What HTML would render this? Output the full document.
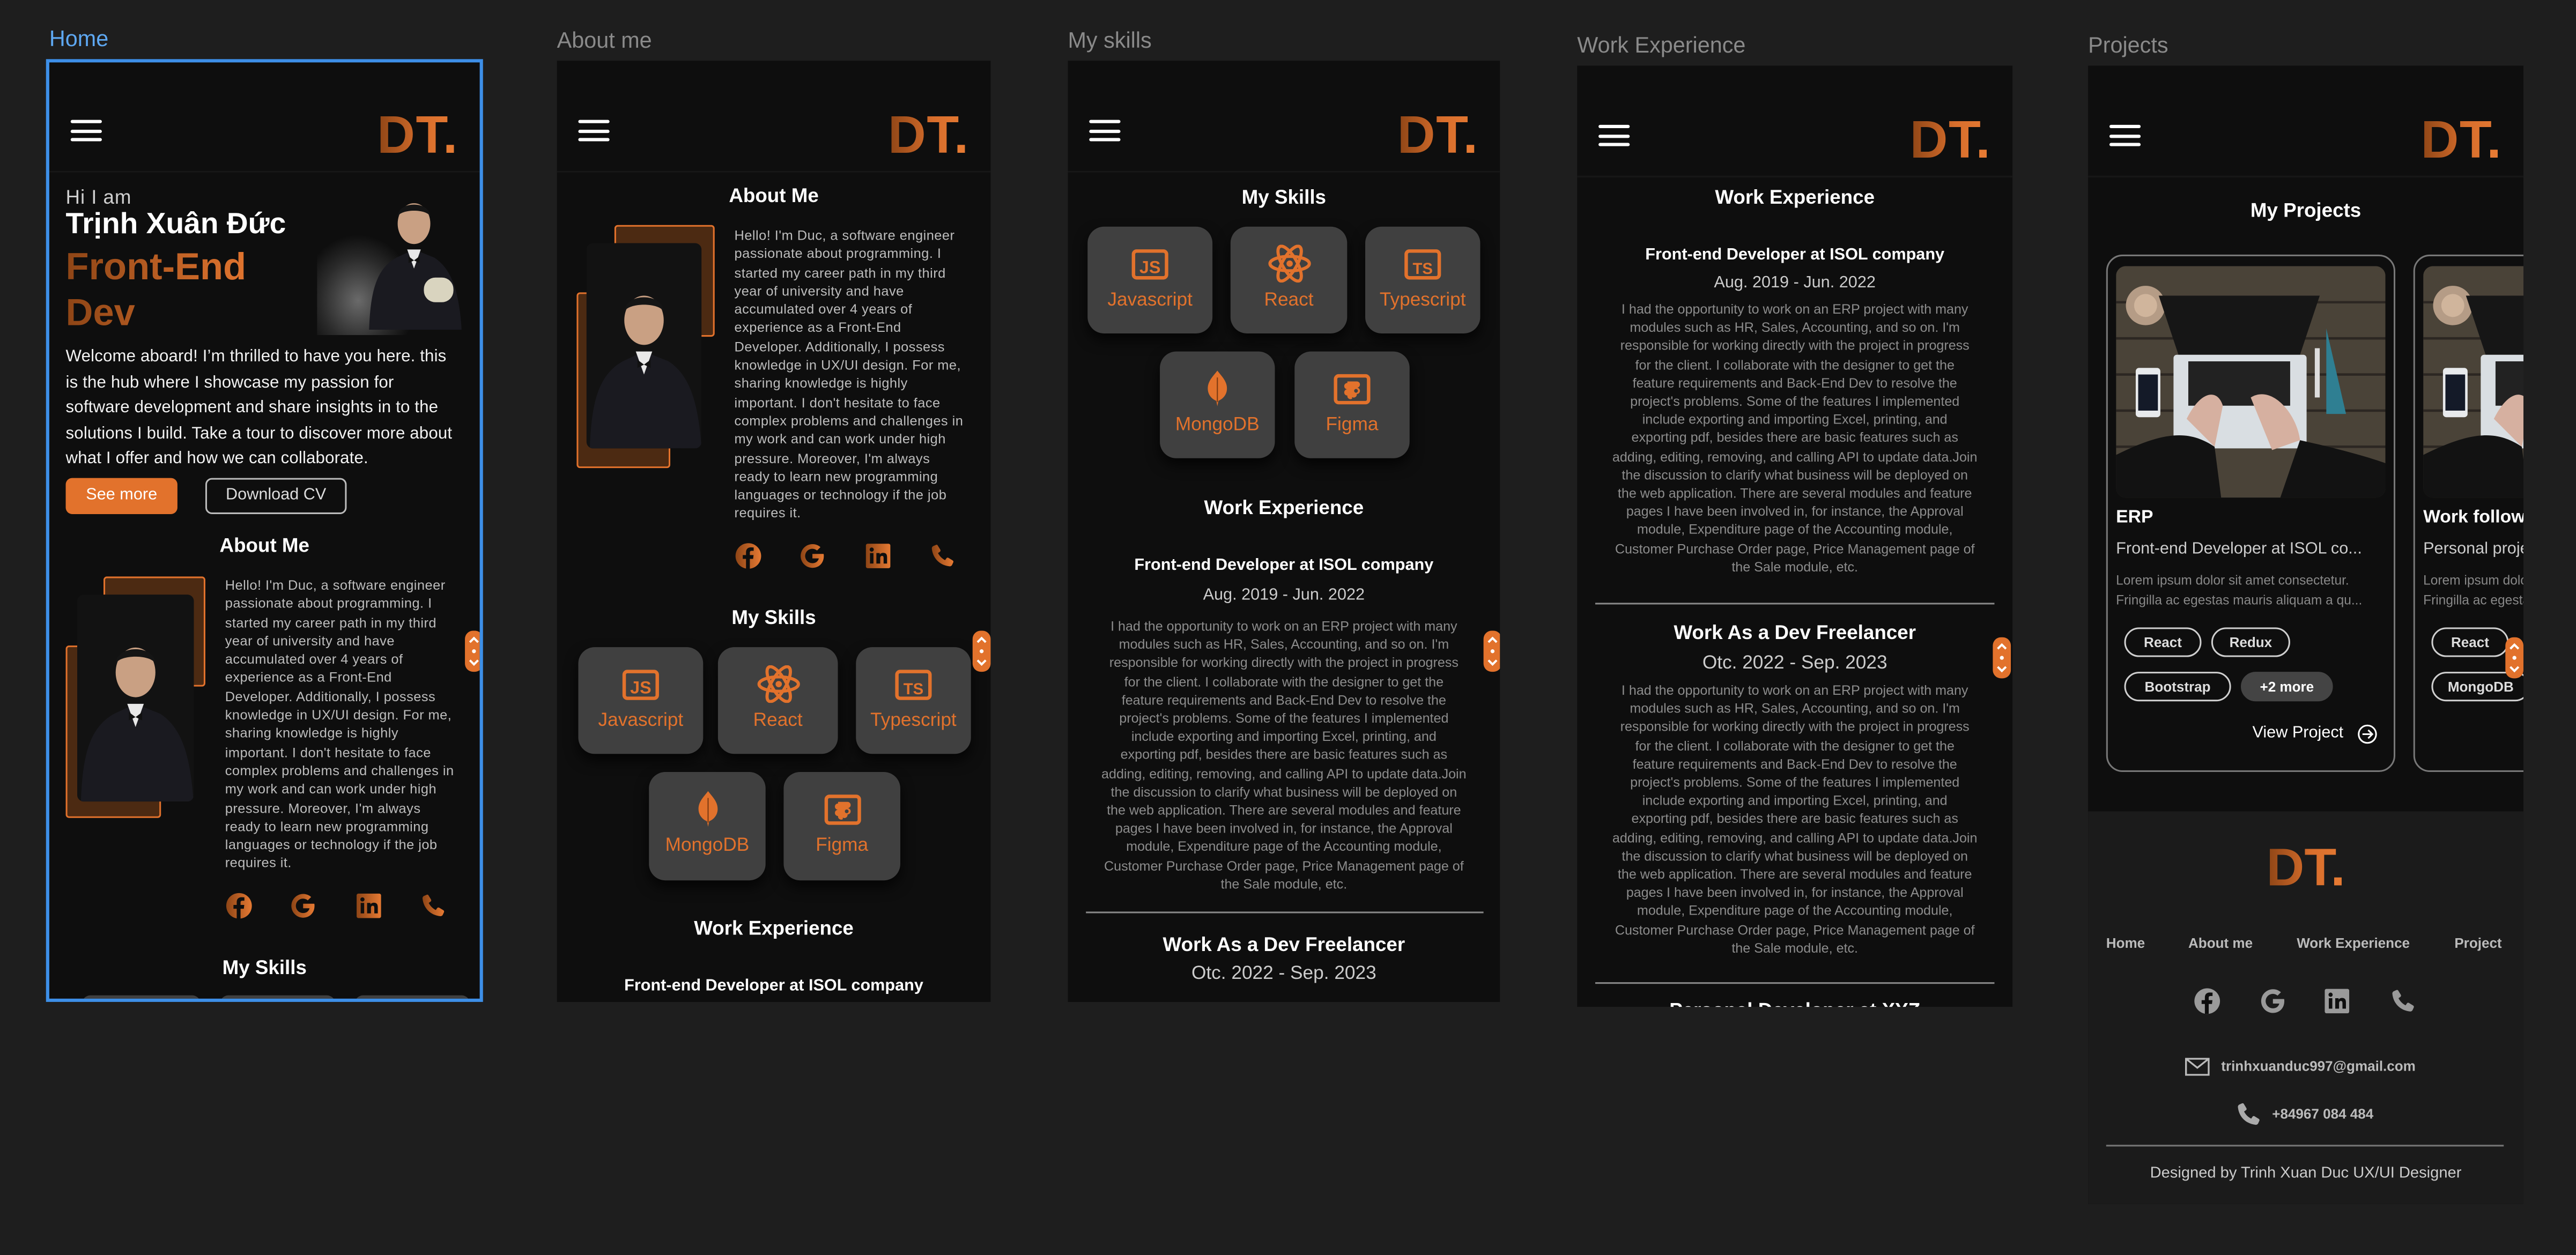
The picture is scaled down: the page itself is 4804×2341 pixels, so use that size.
<!DOCTYPE html>
<html><head><meta charset="utf-8">
<style>
html,body{margin:0;padding:0;}
body{width:4804px;height:2340px;overflow:hidden;background:#1e1e1e;font-family:"Liberation Sans","Noto Sans CJK SC",sans-serif;}
#s{position:absolute;left:0;top:0;width:1568px;height:764px;transform:scale(3.0638);transform-origin:0 0;}
.a{position:absolute;}
.lbl{position:absolute;font-size:13.5px;color:#8a8a8a;white-space:nowrap;}
.fr{position:absolute;background:#0e0e0e;overflow:hidden;}
.hb{position:absolute;left:13px;top:36px;width:19px;height:14px;}
.hb i{position:absolute;left:0;width:19px;height:2.4px;background:#fff;border-radius:1px;}
.dt{position:absolute;right:13px;top:27px;font-size:32px;font-weight:bold;letter-spacing:0.5px;white-space:nowrap;background:linear-gradient(90deg,#8e4516,#d86e2c 55%,#e67a33);-webkit-background-clip:text;background-clip:text;color:transparent;line-height:36px;}
.hl{position:absolute;left:0;top:67px;width:100%;height:1px;background:#171717;}
.h{position:absolute;left:0;width:100%;text-align:center;color:#fff;font-weight:bold;white-space:nowrap;}
.c{position:absolute;left:0;width:100%;text-align:center;white-space:nowrap;}
.ab{position:absolute;font-size:8.3px;line-height:11.3px;color:#bdbdbd;white-space:nowrap;letter-spacing:0.15px;}
.wp{position:absolute;left:0;width:100%;text-align:center;font-size:8.2px;line-height:11.2px;color:#8c8c8c;white-space:nowrap;}
.br1{position:absolute;border:1.5px solid #e2722c;background:#4c2a12;border-radius:2px;box-sizing:border-box;}
.ph{position:absolute;border-radius:4px;overflow:hidden;background:#121212;}
.card{position:absolute;background:#404040;border-radius:10px;box-shadow:0 4px 8px rgba(0,0,0,.7);color:#e2722c;font-size:11.5px;text-align:center;}
.card svg{position:absolute;left:50%;top:13px;transform:translateX(-50%);}
.card span{position:absolute;left:0;right:0;top:39px;white-space:nowrap;}
.sc{position:absolute;width:11px;height:25px;background:#e2722c;border-radius:5px;}
.sc::after{content:"";position:absolute;left:0;top:0;width:11px;height:25px;background:no-repeat center/11px 25px url();}
.ic{position:absolute;width:17px;height:17px;}
.tag{position:absolute;height:18px;border:1px solid #cfcfcf;border-radius:9px;box-sizing:border-box;color:#ddd;font-size:8.5px;line-height:16px;text-align:center;font-weight:bold;}
</style></head><body>
<svg width="0" height="0" style="position:absolute">
<defs>
<linearGradient id="og" x1="0" x2="1" y1="0" y2="0"><stop offset="0" stop-color="#8e4516"/><stop offset="1" stop-color="#e67a33"/></linearGradient>
<symbol id="fb" viewBox="0 0 24 24"><circle cx="12" cy="12" r="11"/><path d="M13.3 23V14.5h2.8l.4-3.3h-3.2V9.2c0-.9.3-1.6 1.6-1.6h1.7V4.7c-.3 0-1.3-.1-2.5-.1-2.5 0-4.1 1.5-4.1 4.2v2.4H7.2v3.3H10V23z" fill="#0e0e0e"/></symbol>
<symbol id="gg" viewBox="0 0 24 24"><path d="M21.6 10.2H12v3.9h5.5c-.6 2.6-2.8 4.1-5.5 4.1a6.2 6.2 0 1 1 4-10.9l2.9-2.9A10.2 10.2 0 1 0 12 22.2c5.300 0 9.8-3.8 9.8-10.2 0-.6 0-1.2-.2-1.8z"/></symbol>
<symbol id="li" viewBox="0 0 24 24"><rect x="1.5" y="1.5" width="21" height="21" rx="1.5"/><rect x="5" y="9.5" width="3" height="9" fill="#0e0e0e"/><circle cx="6.5" cy="6.5" r="1.8" fill="#0e0e0e"/><path d="M10.5 9.5h2.9v1.3c.5-.9 1.6-1.5 3-1.5 2.5 0 3.3 1.5 3.3 4v5.2h-3v-4.6c0-1.1-.2-2-1.3-2s-1.6.8-1.6 2v4.6h-3.3z" fill="#0e0e0e"/></symbol>
<symbol id="ph" viewBox="0 0 24 24"><path d="M6.6 2.5c.6-.3 1.3-.1 1.6.5l2.2 3.6c.3.6.2 1.3-.3 1.7L8.4 9.5c1.3 2.6 3.4 4.8 6.1 6.1l1.2-1.7c.4-.5 1.1-.7 1.700-.3l3.6 2.2c.6.4.8 1.1.5 1.7l-1 2.2c-.4.8-1.3 1.3-2.2 1.2C9.9 20 4 14.1 3.1 5.7c-.1-.9.4-1.8 1.2-2.2z"/></symbol>
<symbol id="js" viewBox="0 0 24 20"><rect x="1.5" y="1.5" width="21" height="17" rx="2" fill="none" stroke="#e2722c" stroke-width="2.2"/><text x="12" y="15.5" text-anchor="middle" font-family="Liberation Sans" font-weight="bold" font-size="11" fill="#e2722c">JS</text></symbol>
<symbol id="ts" viewBox="0 0 24 20"><rect x="1.5" y="1.5" width="21" height="17" rx="2" fill="none" stroke="#e2722c" stroke-width="2.2"/><text x="12" y="16" text-anchor="middle" font-family="Liberation Sans" font-weight="bold" font-size="10" fill="#e2722c">TS</text></symbol>
<symbol id="re" viewBox="0 0 28 24" fill="none" stroke="#e2722c" stroke-width="2"><ellipse cx="14" cy="12" rx="12.5" ry="4.6"/><ellipse cx="14" cy="12" rx="12.5" ry="4.6" transform="rotate(60 14 12)"/><ellipse cx="14" cy="12" rx="12.5" ry="4.6" transform="rotate(-60 14 12)"/><circle cx="14" cy="12" r="2" fill="#e2722c" stroke="none"/></symbol>
<symbol id="mg" viewBox="0 0 24 28"><path d="M12 1c3 4 7 7.5 7 13 0 5-3.5 8-6.2 9L12 27l-.8-4C8.5 22 5 19 5 14c0-5.5 4-9 7-13z" fill="#e2722c"/><path d="M12 6v18" stroke="#7a3a12" stroke-width="0.8"/></symbol>
<symbol id="fg" viewBox="0 0 24 20"><rect x="1.5" y="1.5" width="21" height="17" rx="2" fill="none" stroke="#e2722c" stroke-width="2.2"/><path d="M9 5h6a2 2 0 0 1 0 4 2 2 0 0 1 0 4 2 2 0 0 1-3 2v1a2 2 0 0 1-3-2 2 2 0 0 1 0-4 2 2 0 0 1 0-4z" fill="#e2722c"/><circle cx="14.5" cy="11" r="1.2" fill="#404040"/></symbol>
<symbol id="person" viewBox="0 0 70 125"><path d="M2 125 C3 95 8 80 22 72 L35 66 L50 72 C62 80 68 95 70 125Z" fill="#1a1a20"/><path d="M30 66 L35 80 L40 66Z" fill="#e8e8e8"/><path d="M31 71 L35 74 L39 71 L39 76 L35 74 L31 76Z" fill="#111"/><ellipse cx="35" cy="47" rx="12" ry="15" fill="#c9a083"/><path d="M23 42 C23 30 47 30 47 42 C45 36 25 36 23 42Z" fill="#151515"/></symbol>
<symbol id="scr" viewBox="0 0 11 25" fill="none" stroke="#fff" stroke-width="1.3"><path d="M3 7l2.5-2.5L8 7M3 18l2.5 2.5L8 18"/><circle cx="5.5" cy="12.5" r="1.2" fill="#fff" stroke="none"/></symbol>
<symbol id="laptop" viewBox="0 0 164 141"><rect width="164" height="141" fill="#4a4338"/><g stroke="#2c2722" stroke-width="1.5"><line x1="0" y1="22" x2="164" y2="22"/><line x1="0" y1="44" x2="164" y2="44"/><line x1="0" y1="66" x2="164" y2="66"/><line x1="0" y1="88" x2="164" y2="88"/><line x1="0" y1="110" x2="164" y2="110"/></g><circle cx="18" cy="24" r="12" fill="#b59c86"/><circle cx="18" cy="24" r="7" fill="#d0b59c"/><path d="M26 18 L124 18 L112 54 L38 54Z" fill="#161616"/><rect x="35" y="54" width="81" height="57" rx="2" fill="#d9dee2"/><rect x="44" y="58" width="62" height="27" fill="#222"/><rect x="12" y="62" width="15" height="30" rx="2" fill="#e8eaec"/><rect x="13.5" y="66" width="12" height="22" fill="#141a28"/><path d="M128 38 L140 90 L128 90Z" fill="#2f7f92"/><rect x="121" y="50" width="3" height="30" fill="#ddd"/><path d="M43 93 C52 75 62 75 65 85 L60 110 Z" fill="#d6b0a0"/><path d="M82 80 C95 72 110 90 112 106 L95 112 Z" fill="#d6b0a0"/><path d="M0 141 L0 115 C30 100 45 100 60 110 L64 141Z M100 141 L112 106 C130 110 150 115 164 120 L164 141Z" fill="#121212"/></symbol>
</defs></svg>

<div id="s">
<div class="lbl" style="left:30px;top:16px;color:#5ea8f2;">Home</div>
<div class="lbl" style="left:339px;top:17px;">About me</div>
<div class="lbl" style="left:650px;top:17px;">My skills</div>
<div class="lbl" style="left:960px;top:20px;">Work Experience</div>
<div class="lbl" style="left:1271px;top:20px;">Projects</div>

<!-- FRAME 1 -->
<div class="a" style="left:28px;top:36px;width:266px;height:574px;border:2px solid #3d8fe8;box-sizing:border-box;z-index:2;pointer-events:none;"></div>
<div class="fr" style="left:30px;top:38px;width:262px;height:570px;">
 <div class="hb" style="top:35px"><i style="top:0"></i><i style="top:5.5px"></i><i style="top:11px"></i></div>
 <div class="dt" style="top:26px">DT<span style="color:#e67a33;-webkit-text-fill-color:#e67a33">.</span></div>
 <div class="hl" style="top:66px"></div>
 <div class="a" style="left:10px;top:75px;font-size:12px;color:#cfcfcf;letter-spacing:.3px;">Hi I am</div>
 <div class="a" style="left:10px;top:88px;font-size:18px;font-weight:bold;color:#fff;white-space:nowrap;">Trịnh Xuân Đức</div>
 <div class="a" style="left:10px;top:110px;font-size:23px;line-height:28px;font-weight:bold;color:#c25f22;background:linear-gradient(90deg,#8e4516,#e0742f);-webkit-background-clip:text;background-clip:text;-webkit-text-fill-color:transparent;">Front-End<br>Dev</div>
 <div class="a" style="left:163px;top:75px;width:89px;height:91px;overflow:hidden;background:radial-gradient(ellipse 35px 40px at 25px 70px,#6a6a6a,#2a2a2a 65%,#0e0e0e);">
  <svg class="a" style="left:30px;top:-16px" width="58" height="104" viewBox="0 0 70 125"><use href="#person"/></svg>
  <div class="a" style="left:65px;top:56px;width:18px;height:15px;border-radius:7px;background:#d9d4bf;"></div>
 </div>
 <div class="a" style="left:10px;top:172px;font-size:10.2px;line-height:15.5px;color:#f2f2f2;white-space:nowrap;letter-spacing:.05px;">Welcome aboard! I’m thrilled to have you here. this<br>is the hub where I showcase my passion for<br>software development and share insights in to the<br>solutions I build. Take a tour to discover more about<br>what I offer and how we can collaborate.</div>
 <div class="a" style="left:10px;top:253px;width:68px;height:22px;background:#e2722c;border-radius:4px;color:#fff;font-size:10px;text-align:center;line-height:22px;">See more</div>
 <div class="a" style="left:95px;top:253px;width:86px;height:22px;border:1px solid #bbb;box-sizing:border-box;border-radius:4px;color:#ddd;font-size:10px;text-align:center;line-height:20px;">Download CV</div>
 <div class="h" style="top:287px;font-size:12px;">About Me</div>
 <div class="br1" style="left:33px;top:313px;width:62px;height:67px;"></div>
 <div class="br1" style="left:10px;top:355px;width:58px;height:105px;"></div>
 <div class="ph" style="left:17px;top:324px;width:71px;height:126px;"><svg width="71" height="126" viewBox="0 0 70 125"><use href="#person"/></svg></div>
 <div class="ab" style="left:107px;top:313px;">Hello! I'm Duc, a software engineer<br>passionate about programming. I<br>started my career path in my third<br>year of university and have<br>accumulated over 4 years of<br>experience as a Front-End<br>Developer. Additionally, I possess<br>knowledge in UX/UI design. For me,<br>sharing knowledge is highly<br>important. I don't hesitate to face<br>complex problems and challenges in<br>my work and can work under high<br>pressure. Moreover, I'm always<br>ready to learn new programming<br>languages or technology if the job<br>requires it.</div>
 <svg class="ic" style="left:107px;top:505px" fill="url(#og)"><use href="#fb"/></svg>
 <svg class="ic" style="left:146px;top:505px" fill="url(#og)"><use href="#gg"/></svg>
 <svg class="ic" style="left:186px;top:505px" fill="url(#og)"><use href="#li"/></svg>
 <svg class="ic" style="left:225px;top:505px" fill="url(#og)"><use href="#ph"/></svg>
 <div class="h" style="top:544px;font-size:12px;">My Skills</div>
 <div class="sc" style="left:253px;top:346px"><svg width="11" height="25"><use href="#scr"/></svg></div>
 <div class="a" style="left:20px;top:568px;width:72px;height:10px;background:#404040;border-radius:8px;"></div>
 <div class="a" style="left:104px;top:568px;width:70px;height:10px;background:#404040;border-radius:8px;"></div>
 <div class="a" style="left:186px;top:568px;width:70px;height:10px;background:#404040;border-radius:8px;"></div>
</div>

<!-- FRAME 2 -->
<div class="fr" style="left:339px;top:37px;width:264px;height:573px;">
 <div class="hb"><i style="top:0"></i><i style="top:5.5px"></i><i style="top:11px"></i></div>
 <div class="dt">DT<span style="color:#e67a33;-webkit-text-fill-color:#e67a33">.</span></div>
 <div class="hl"></div>
 <div class="h" style="top:75px;font-size:12px;">About Me</div>
 <div class="br1" style="left:35px;top:100px;width:61px;height:68px;"></div>
 <div class="br1" style="left:12px;top:141px;width:57px;height:107px;"></div>
 <div class="ph" style="left:18px;top:111px;width:70px;height:125px;"><svg width="70" height="125" viewBox="0 0 70 125"><use href="#person"/></svg></div>
 <div class="ab" style="left:108px;top:101px;">Hello! I'm Duc, a software engineer<br>passionate about programming. I<br>started my career path in my third<br>year of university and have<br>accumulated over 4 years of<br>experience as a Front-End<br>Developer. Additionally, I possess<br>knowledge in UX/UI design. For me,<br>sharing knowledge is highly<br>important. I don't hesitate to face<br>complex problems and challenges in<br>my work and can work under high<br>pressure. Moreover, I'm always<br>ready to learn new programming<br>languages or technology if the job<br>requires it.</div>
 <svg class="ic" style="left:108px;top:293px" fill="url(#og)"><use href="#fb"/></svg>
 <svg class="ic" style="left:147px;top:293px" fill="url(#og)"><use href="#gg"/></svg>
 <svg class="ic" style="left:187px;top:293px" fill="url(#og)"><use href="#li"/></svg>
 <svg class="ic" style="left:226px;top:293px" fill="url(#og)"><use href="#ph"/></svg>
 <div class="h" style="top:332px;font-size:12px;">My Skills</div>
 <div class="card" style="left:13px;top:357px;width:76px;height:65px;"><svg width="23" height="20"><use href="#js"/></svg><span>Javascript</span></div>
 <div class="card" style="left:98px;top:357px;width:73px;height:65px;"><svg width="27" height="23" style="top:11px"><use href="#re"/></svg><span>React</span></div>
 <div class="card" style="left:182px;top:357px;width:70px;height:65px;"><svg width="23" height="20"><use href="#ts"/></svg><span>Typescript</span></div>
 <div class="card" style="left:56px;top:433px;width:71px;height:66px;"><svg width="20" height="25" style="top:10px"><use href="#mg"/></svg><span>MongoDB</span></div>
 <div class="card" style="left:138px;top:433px;width:71px;height:66px;"><svg width="23" height="20"><use href="#fg"/></svg><span>Figma</span></div>
 <div class="h" style="top:521px;font-size:12px;">Work Experience</div>
 <div class="h" style="top:558px;font-size:10px;">Front-end Developer at ISOL company</div>
 <div class="sc" style="left:253px;top:347px"><svg width="11" height="25"><use href="#scr"/></svg></div>
</div>

<!-- FRAME 3 -->
<div class="fr" style="left:650px;top:37px;width:263px;height:573px;">
 <div class="hb"><i style="top:0"></i><i style="top:5.5px"></i><i style="top:11px"></i></div>
 <div class="dt">DT<span style="color:#e67a33;-webkit-text-fill-color:#e67a33">.</span></div>
 <div class="hl"></div>
 <div class="h" style="top:76px;font-size:12px;">My Skills</div>
 <div class="card" style="left:12px;top:101px;width:76px;height:65px;"><svg width="23" height="20"><use href="#js"/></svg><span>Javascript</span></div>
 <div class="card" style="left:99px;top:101px;width:71px;height:65px;"><svg width="27" height="23" style="top:11px"><use href="#re"/></svg><span>React</span></div>
 <div class="card" style="left:181px;top:101px;width:70px;height:65px;"><svg width="23" height="20"><use href="#ts"/></svg><span>Typescript</span></div>
 <div class="card" style="left:56px;top:177px;width:70px;height:65px;"><svg width="20" height="25" style="top:10px"><use href="#mg"/></svg><span>MongoDB</span></div>
 <div class="card" style="left:138px;top:177px;width:70px;height:65px;"><svg width="23" height="20"><use href="#fg"/></svg><span>Figma</span></div>
 <div class="h" style="top:265px;font-size:12px;">Work Experience</div>
 <div class="h" style="top:302px;font-size:10px;">Front-end Developer at ISOL company</div>
 <div class="c" style="top:320px;font-size:10px;color:#ccc;">Aug. 2019 - Jun. 2022</div>
 <div class="wp" style="top:339px;">I had the opportunity to work on an ERP project with many<br>modules such as HR, Sales, Accounting, and so on. I'm<br>responsible for working directly with the project in progress<br>for the client. I collaborate with the designer to get the<br>feature requirements and Back-End Dev to resolve the<br>project's problems. Some of the features I implemented<br>include exporting and importing Excel, printing, and<br>exporting pdf, besides there are basic features such as<br>adding, editing, removing, and calling API to update data.Join<br>the discussion to clarify what business will be deployed on<br>the web application. There are several modules and feature<br>pages I have been involved in, for instance, the Approval<br>module, Expenditure page of the Accounting module,<br>Customer Purchase Order page, Price Management page of<br>the Sale module, etc.</div>
 <div class="a" style="left:11px;top:518px;width:242px;height:1px;background:#888;"></div>
 <div class="h" style="top:531px;font-size:12px;">Work As a Dev Freelancer</div>
 <div class="c" style="top:550px;font-size:11.5px;color:#ccc;">Otc. 2022 - Sep. 2023</div>
 <div class="sc" style="left:253px;top:347px"><svg width="11" height="25"><use href="#scr"/></svg></div>
</div>

<!-- FRAME 4 -->
<div class="fr" style="left:960px;top:40px;width:265px;height:573px;">
 <div class="hb"><i style="top:0"></i><i style="top:5.5px"></i><i style="top:11px"></i></div>
 <div class="dt">DT<span style="color:#e67a33;-webkit-text-fill-color:#e67a33">.</span></div>
 <div class="hl"></div>
 <div class="h" style="top:73px;font-size:12px;">Work Experience</div>
 <div class="h" style="top:110px;font-size:10px;">Front-end Developer at ISOL company</div>
 <div class="c" style="top:127px;font-size:10px;color:#ccc;">Aug. 2019 - Jun. 2022</div>
 <div class="wp" style="top:143px;">I had the opportunity to work on an ERP project with many<br>modules such as HR, Sales, Accounting, and so on. I'm<br>responsible for working directly with the project in progress<br>for the client. I collaborate with the designer to get the<br>feature requirements and Back-End Dev to resolve the<br>project's problems. Some of the features I implemented<br>include exporting and importing Excel, printing, and<br>exporting pdf, besides there are basic features such as<br>adding, editing, removing, and calling API to update data.Join<br>the discussion to clarify what business will be deployed on<br>the web application. There are several modules and feature<br>pages I have been involved in, for instance, the Approval<br>module, Expenditure page of the Accounting module,<br>Customer Purchase Order page, Price Management page of<br>the Sale module, etc.</div>
 <div class="a" style="left:11px;top:327px;width:243px;height:1px;background:#888;"></div>
 <div class="h" style="top:338px;font-size:12px;">Work As a Dev Freelancer</div>
 <div class="c" style="top:358px;font-size:11.5px;color:#ccc;">Otc. 2022 - Sep. 2023</div>
 <div class="wp" style="top:375px;">I had the opportunity to work on an ERP project with many<br>modules such as HR, Sales, Accounting, and so on. I'm<br>responsible for working directly with the project in progress<br>for the client. I collaborate with the designer to get the<br>feature requirements and Back-End Dev to resolve the<br>project's problems. Some of the features I implemented<br>include exporting and importing Excel, printing, and<br>exporting pdf, besides there are basic features such as<br>adding, editing, removing, and calling API to update data.Join<br>the discussion to clarify what business will be deployed on<br>the web application. There are several modules and feature<br>pages I have been involved in, for instance, the Approval<br>module, Expenditure page of the Accounting module,<br>Customer Purchase Order page, Price Management page of<br>the Sale module, etc.</div>
 <div class="a" style="left:11px;top:558px;width:243px;height:1px;background:#888;"></div>
 <div class="h" style="top:568px;font-size:12px;">Personal Developer at XYZ</div>
 <div class="sc" style="left:253px;top:348px"><svg width="11" height="25"><use href="#scr"/></svg></div>
</div>

<!-- FRAME 5 -->
<div class="fr" style="left:1271px;top:40px;width:265px;height:693px;">
 <div class="hb"><i style="top:0"></i><i style="top:5.5px"></i><i style="top:11px"></i></div>
 <div class="dt">DT<span style="color:#e67a33;-webkit-text-fill-color:#e67a33">.</span></div>
 <div class="hl"></div>
 <div class="h" style="top:81px;font-size:12px;">My Projects</div>
 <div class="a" style="left:11px;top:115px;width:176px;height:315px;border:1px solid #777;border-radius:10px;box-sizing:border-box;"></div>
 <div class="a" style="left:17px;top:122px;width:164px;height:141px;border-radius:6px;overflow:hidden;"><svg width="164" height="141"><use href="#laptop"/></svg></div>
 <div class="a" style="left:17px;top:269px;font-size:11px;font-weight:bold;color:#fff;">ERP</div>
 <div class="a" style="left:17px;top:289px;font-size:10px;color:#ccc;white-space:nowrap;">Front-end Developer at ISOL co...</div>
 <div class="a" style="left:17px;top:308px;font-size:8px;line-height:12px;color:#888;white-space:nowrap;">Lorem ipsum dolor sit amet consectetur.<br>Fringilla ac egestas mauris aliquam a qu...</div>
 <div class="tag" style="left:22px;top:342px;width:47px;">React</div>
 <div class="tag" style="left:75px;top:342px;width:48px;">Redux</div>
 <div class="tag" style="left:22px;top:369px;width:65px;">Bootstrap</div>
 <div class="tag" style="left:93px;top:369px;width:56px;background:#444;border-color:#444;color:#fff;">+2 more</div>
 <div class="a" style="left:100px;top:401px;font-size:10px;color:#fff;white-space:nowrap;">View Project</div>
 <svg class="a" style="left:164px;top:401px" width="12" height="12" viewBox="0 0 12 12" fill="none" stroke="#fff" stroke-width="1"><circle cx="6" cy="6" r="5.3"/><path d="M3 6h6M6.5 3.5L9 6 6.5 8.5"/></svg>
 <div class="a" style="left:198px;top:115px;width:176px;height:315px;border:1px solid #777;border-radius:10px;box-sizing:border-box;"></div>
 <div class="a" style="left:204px;top:122px;width:164px;height:141px;border-radius:6px;overflow:hidden;"><svg width="164" height="141"><use href="#laptop"/></svg></div>
 <div class="a" style="left:204px;top:269px;font-size:11px;font-weight:bold;color:#fff;white-space:nowrap;">Work follow</div>
 <div class="a" style="left:204px;top:289px;font-size:10px;color:#ccc;white-space:nowrap;">Personal project</div>
 <div class="a" style="left:204px;top:308px;font-size:8px;line-height:12px;color:#888;white-space:nowrap;">Lorem ipsum dolor<br>Fringilla ac egestas</div>
 <div class="tag" style="left:209px;top:342px;width:47px;">React</div>
 <div class="tag" style="left:209px;top:369px;width:60px;">MongoDB</div>
 <div class="sc" style="left:254px;top:348px"><svg width="11" height="25"><use href="#scr"/></svg></div>
 <div class="a" style="left:0;top:454px;width:265px;height:239px;background:#1b1b1b;">
  <div class="a" style="left:0;width:265px;top:16px;text-align:center;"><span style="font-size:32px;font-weight:bold;line-height:36px;background:linear-gradient(90deg,#8e4516,#d86e2c 55%,#e67a33);-webkit-background-clip:text;background-clip:text;color:transparent;">DT<span style="-webkit-text-fill-color:#e67a33">.</span></span></div>
  <div class="a" style="left:11px;top:75px;font-size:8.5px;font-weight:bold;color:#bbb;white-space:nowrap;">Home</div>
  <div class="a" style="left:61px;top:75px;font-size:8.5px;font-weight:bold;color:#bbb;white-space:nowrap;">About me</div>
  <div class="a" style="left:127px;top:75px;font-size:8.5px;font-weight:bold;color:#bbb;white-space:nowrap;">Work Experience</div>
  <div class="a" style="left:223px;top:75px;font-size:8.5px;font-weight:bold;color:#bbb;white-space:nowrap;">Project</div>
  <svg class="ic" style="left:64px;top:107px" fill="#9a9a9a"><use href="#fb"/></svg>
  <svg class="ic" style="left:104px;top:107px" fill="#9a9a9a"><use href="#gg"/></svg>
  <svg class="ic" style="left:143px;top:107px" fill="#9a9a9a"><use href="#li"/></svg>
  <svg class="ic" style="left:183px;top:107px" fill="#9a9a9a"><use href="#ph"/></svg>
  <svg class="a" style="left:59px;top:150px" width="15" height="11" viewBox="0 0 15 11" fill="none" stroke="#bbb" stroke-width="1.1"><rect x=".6" y=".6" width="13.8" height="9.8"/><path d="M.6.6l6.9 5.5 6.9-5.5"/></svg>
  <div class="a" style="left:81px;top:150px;font-size:8.5px;font-weight:bold;color:#bbb;white-space:nowrap;">trinhxuanduc997@gmail.com</div>
  <svg class="a" style="left:89px;top:176px" width="17" height="17" viewBox="0 0 24 24" fill="#aaa"><use href="#ph"/></svg>
  <div class="a" style="left:112px;top:179px;font-size:8.5px;font-weight:bold;color:#bbb;white-space:nowrap;">+84967 084 484</div>
  <div class="a" style="left:11px;top:203px;width:242px;height:1px;background:#777;"></div>
  <div class="a" style="left:0;width:265px;top:215px;text-align:center;font-size:9.5px;color:#ccc;white-space:nowrap;">Designed by Trinh Xuan Duc UX/UI Designer</div>
 </div>
</div>
</div>
</body></html>
